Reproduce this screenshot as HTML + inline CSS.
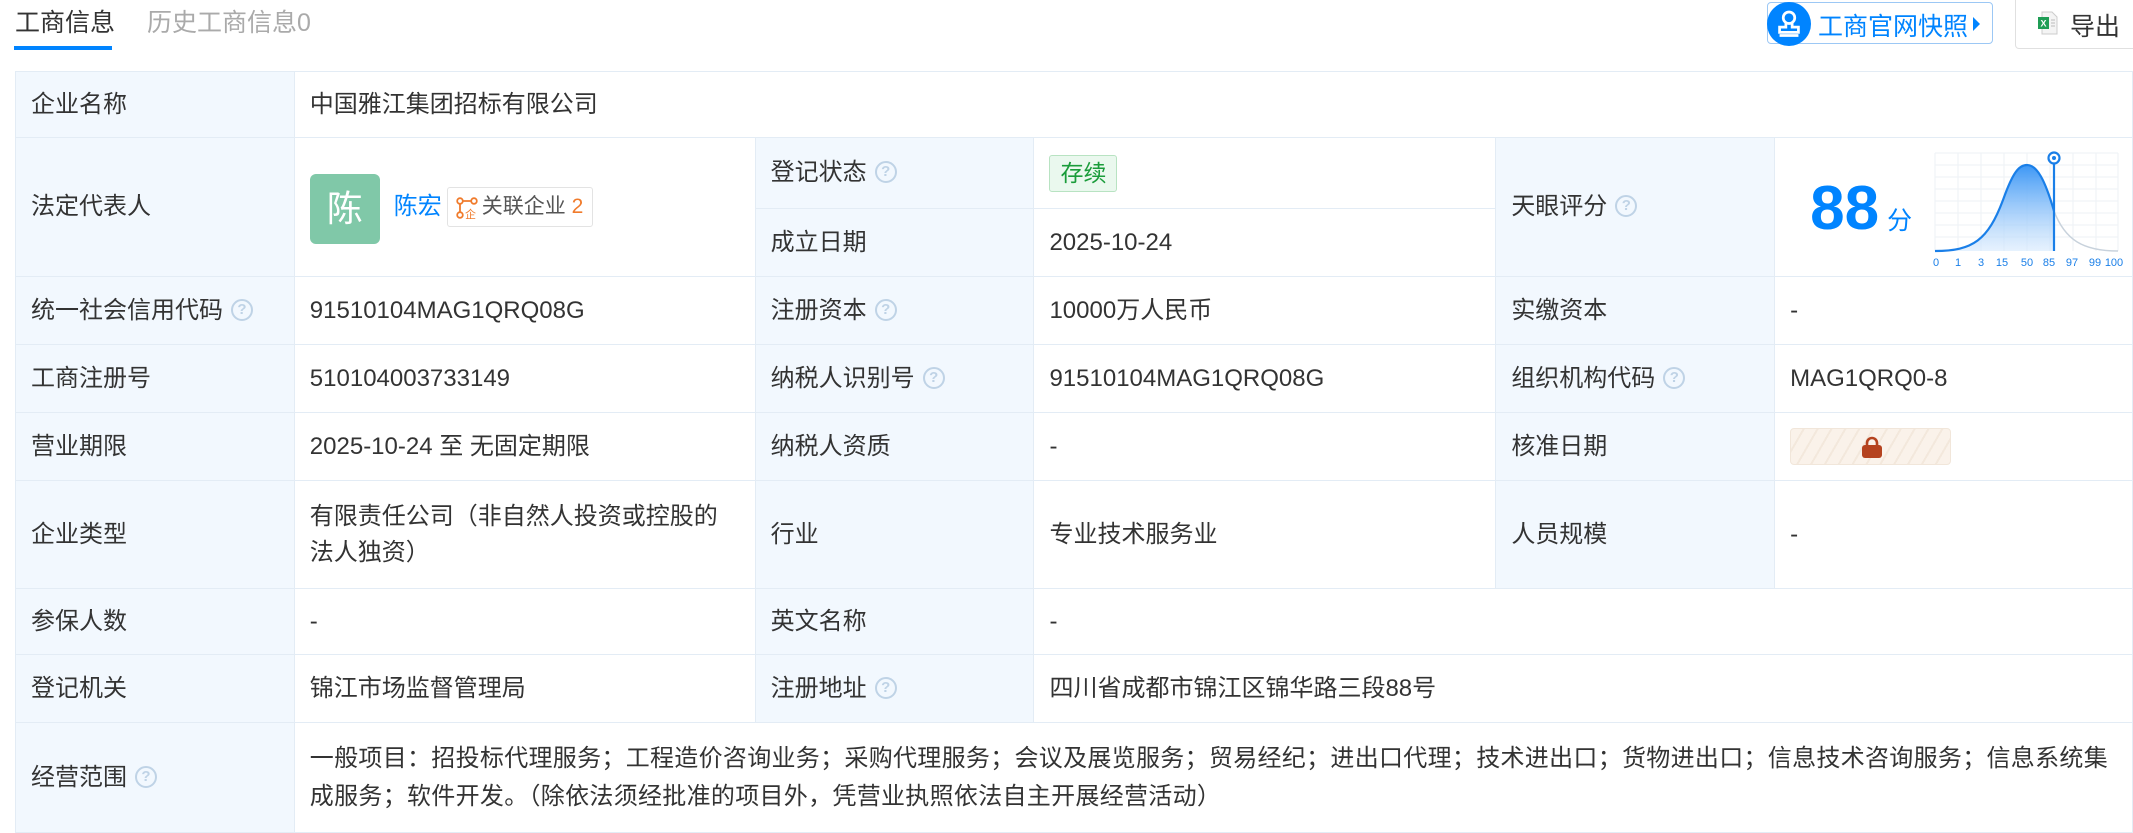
<!DOCTYPE html>
<html><head><meta charset="utf-8">
<style>
*{margin:0;padding:0;box-sizing:border-box}
body{width:2133px;height:830px;overflow:hidden;background:#fff;font-family:"Liberation Sans","Noto Sans CJK SC",sans-serif;color:#333;font-size:24px;position:relative}
.tab1{position:absolute;left:15px;top:3px;font-size:25px;color:#333}
.tab2{position:absolute;left:147px;top:3px;font-size:25px;color:#aaa}
.uline{position:absolute;left:14px;top:46px;width:98px;height:4px;background:#0084ff}
.snap{position:absolute;left:1767px;top:2px;width:226px;height:42px;border:1px solid #9cc8f5;border-radius:4px;color:#0084ff;font-size:25px}
.snap .ic{position:absolute;left:-1px;top:-1px;width:44px;height:44px;border-radius:50%;background:#0084ff}
.snap .t{position:absolute;left:50px;top:4px}
.snap .arr{position:absolute;right:12px;top:14px;width:0;height:0;border-left:7px solid #0084ff;border-top:7px solid transparent;border-bottom:7px solid transparent}
.exp{position:absolute;left:2015px;top:0;width:130px;height:49px;border:1px solid #e0e0e0;border-top:none;border-radius:0 0 4px 4px;font-size:25px}
table{position:absolute;left:15px;top:71px;border-collapse:collapse;table-layout:fixed}
td{border:1px solid #e3ecf5;padding:0 15px;vertical-align:middle;line-height:30px}
td.l{background:#f2f8fe}
.q{display:inline-block;width:22px;height:22px;border:2px solid #bfd3e6;border-radius:50%;color:#bfd3e6;font-size:15px;line-height:18px;text-align:center;vertical-align:middle;margin-left:8px;margin-top:-3px;font-weight:bold}
.tag{display:inline-block;background:#eaf8ee;border:1px solid #b8e3c2;color:#1a9c3a;border-radius:3px;padding:0 10px;line-height:35px;font-size:23px}
</style></head><body>
<div class="tab1">工商信息</div>
<div class="tab2">历史工商信息0</div>
<div class="uline"></div>
<div class="snap"><div class="ic"><svg width="44" height="44" viewBox="0 0 42 42"><circle cx="21" cy="15" r="5.5" fill="none" stroke="#fff" stroke-width="2.6"/><path d="M18 20v4h-6v5h18v-5h-6v-4" fill="none" stroke="#fff" stroke-width="2.6"/><path d="M12 32h18" stroke="#fff" stroke-width="2.6"/></svg></div><span class="t">工商官网快照</span><span class="arr"></span></div>
<div class="exp"><svg style="position:absolute;left:22px;top:11px" width="20" height="24" viewBox="0 0 20 24"><path d="M4 1h10l5 5v17H4z" fill="#f4f4f4" stroke="#ccc"/><rect x="0" y="6" width="11" height="12" fill="#1f9d55"/><text x="2.5" y="15.5" font-size="9" fill="#fff" font-family="Liberation Sans" font-weight="bold">X</text><path d="M13 9h4M13 12h4M13 15h4" stroke="#bbb"/></svg><span style="position:absolute;left:54px;top:7px">导出</span></div>

<table>
<colgroup><col style="width:279px"><col style="width:461px"><col style="width:279px"><col style="width:462px"><col style="width:279px"><col style="width:358px"></colgroup>
<tr style="height:66px"><td class="l">企业名称</td><td colspan="5">中国雅江集团招标有限公司</td></tr>
<tr style="height:71px"><td class="l" rowspan="2">法定代表人</td><td rowspan="2" style="position:relative">
<div style="position:absolute;left:15px;top:36px;width:70px;height:70px;border-radius:6px;background:#80c8a8;color:#fff;font-size:36px;text-align:center;line-height:70px">陈</div>
<div style="position:absolute;left:99px;top:51px;color:#0084ff;font-size:24px;line-height:36px">陈宏</div>
<div style="position:absolute;left:152px;top:49px;width:146px;height:40px;border:1px solid #e3e3e3;border-radius:3px;font-size:21px;line-height:38px;color:#555;padding-left:34px;white-space:nowrap"><svg style="position:absolute;left:8px;top:9px" width="22" height="22" viewBox="0 0 22 22"><circle cx="4" cy="4" r="2.8" fill="none" stroke="#f07b2c" stroke-width="1.8"/><circle cx="18" cy="4" r="2.8" fill="none" stroke="#f07b2c" stroke-width="1.8"/><circle cx="4" cy="18" r="2.8" fill="none" stroke="#f07b2c" stroke-width="1.8"/><path d="M7 4h8M4 7v8" stroke="#f07b2c" stroke-width="1.8"/><text x="9" y="21" font-size="11" fill="#f07b2c" font-family="Noto Sans CJK SC">企</text></svg>关联企业 <span style="color:#f07b2c">2</span></div>
</td><td class="l">登记状态<span class="q">?</span></td><td><span class="tag">存续</span></td><td class="l" rowspan="2">天眼评分<span class="q">?</span></td><td rowspan="2" style="position:relative">
<div style="position:absolute;left:35px;top:40px;color:#0084ff;font-size:62px;font-weight:bold;line-height:62px">88<span style="font-size:25px;font-weight:normal;margin-left:8px">分</span></div>
<svg style="position:absolute;left:158px;top:12px" width="200" height="122" viewBox="0 0 200 122">
<defs><linearGradient id="g" x1="0" y1="0" x2="0" y2="1"><stop offset="0" stop-color="#3d97f5"/><stop offset="1" stop-color="#d6e9fd" stop-opacity=".6"/></linearGradient></defs>
<g stroke="#eef2f6" stroke-width="1">
<path d="M2 3h183M2 15h183M2 27h183M2 39h183M2 51h183M2 63h183M2 75h183M2 87h183"/>
<path d="M2 3v98M25 3v98M48 3v98M71 3v98M94 3v98M117 3v98M140 3v98M163 3v98M185 3v98"/>
</g>
<path d="M2 101C40 101 55 90 70 50C80 22 86 15 94 15C104 15 112 30 121 61L121 101Z" fill="url(#g)"/>
<path d="M121 61C132 90 150 101 185 101" fill="none" stroke="#c8d2dc" stroke-width="1.5"/>
<path d="M2 101C40 101 55 90 70 50C80 22 86 15 94 15C104 15 112 30 121 61" fill="none" stroke="#1a7fe8" stroke-width="2.2"/>
<path d="M121 10V101" stroke="#1a7fe8" stroke-width="2.2"/>
<circle cx="121" cy="8" r="5.5" fill="#fff" stroke="#1a7fe8" stroke-width="2.2"/><circle cx="121" cy="8" r="2" fill="#1a7fe8"/>
<g font-size="11" fill="#1a7fe8" font-family="Liberation Sans" text-anchor="middle"><text x="3" y="116">0</text><text x="25" y="116">1</text><text x="48" y="116">3</text><text x="69" y="116">15</text><text x="94" y="116">50</text><text x="116" y="116">85</text><text x="139" y="116">97</text><text x="162" y="116">99</text><text x="181" y="116">100</text></g>
</svg></td></tr>
<tr style="height:68px"><td class="l">成立日期</td><td>2025-10-24</td></tr>
<tr style="height:68px"><td class="l">统一社会信用代码<span class="q">?</span></td><td>91510104MAG1QRQ08G</td><td class="l">注册资本<span class="q">?</span></td><td>10000万人民币</td><td class="l">实缴资本</td><td>-</td></tr>
<tr style="height:68px"><td class="l">工商注册号</td><td>510104003733149</td><td class="l">纳税人识别号<span class="q">?</span></td><td>91510104MAG1QRQ08G</td><td class="l">组织机构代码<span class="q">?</span></td><td>MAG1QRQ0-8</td></tr>
<tr style="height:68px"><td class="l">营业期限</td><td>2025-10-24 至 无固定期限</td><td class="l">纳税人资质</td><td>-</td><td class="l">核准日期</td><td><div style="width:161px;height:37px;border-radius:4px;border:1px solid #f1e6da;background:repeating-linear-gradient(120deg,#faf2ea 0 10px,#f3e8dc 10px 12px);position:relative"><svg style="position:absolute;left:70px;top:6px" width="22" height="24" viewBox="0 0 22 24"><path d="M6 11V8a5 5 0 0 1 10 0v3" fill="none" stroke="#b5431f" stroke-width="2.6"/><rect x="1" y="10" width="20" height="13" rx="3" fill="#b5431f"/></svg></div></td></tr>
<tr style="height:108px"><td class="l">企业类型</td><td style="line-height:36px">有限责任公司（非自然人投资或控股的法人独资）</td><td class="l">行业</td><td>专业技术服务业</td><td class="l">人员规模</td><td>-</td></tr>
<tr style="height:66px"><td class="l">参保人数</td><td>-</td><td class="l">英文名称</td><td colspan="3">-</td></tr>
<tr style="height:68px"><td class="l">登记机关</td><td>锦江市场监督管理局</td><td class="l">注册地址<span class="q">?</span></td><td colspan="3">四川省成都市锦江区锦华路三段88号</td></tr>
<tr style="height:110px"><td class="l">经营范围<span class="q">?</span></td><td colspan="5" style="line-height:38px;letter-spacing:0.3px">一般项目：招投标代理服务；工程造价咨询业务；采购代理服务；会议及展览服务；贸易经纪；进出口代理；技术进出口；货物进出口；信息技术咨询服务；信息系统集成服务；软件开发。（除依法须经批准的项目外，凭营业执照依法自主开展经营活动）</td></tr>
</table>
</body></html>
